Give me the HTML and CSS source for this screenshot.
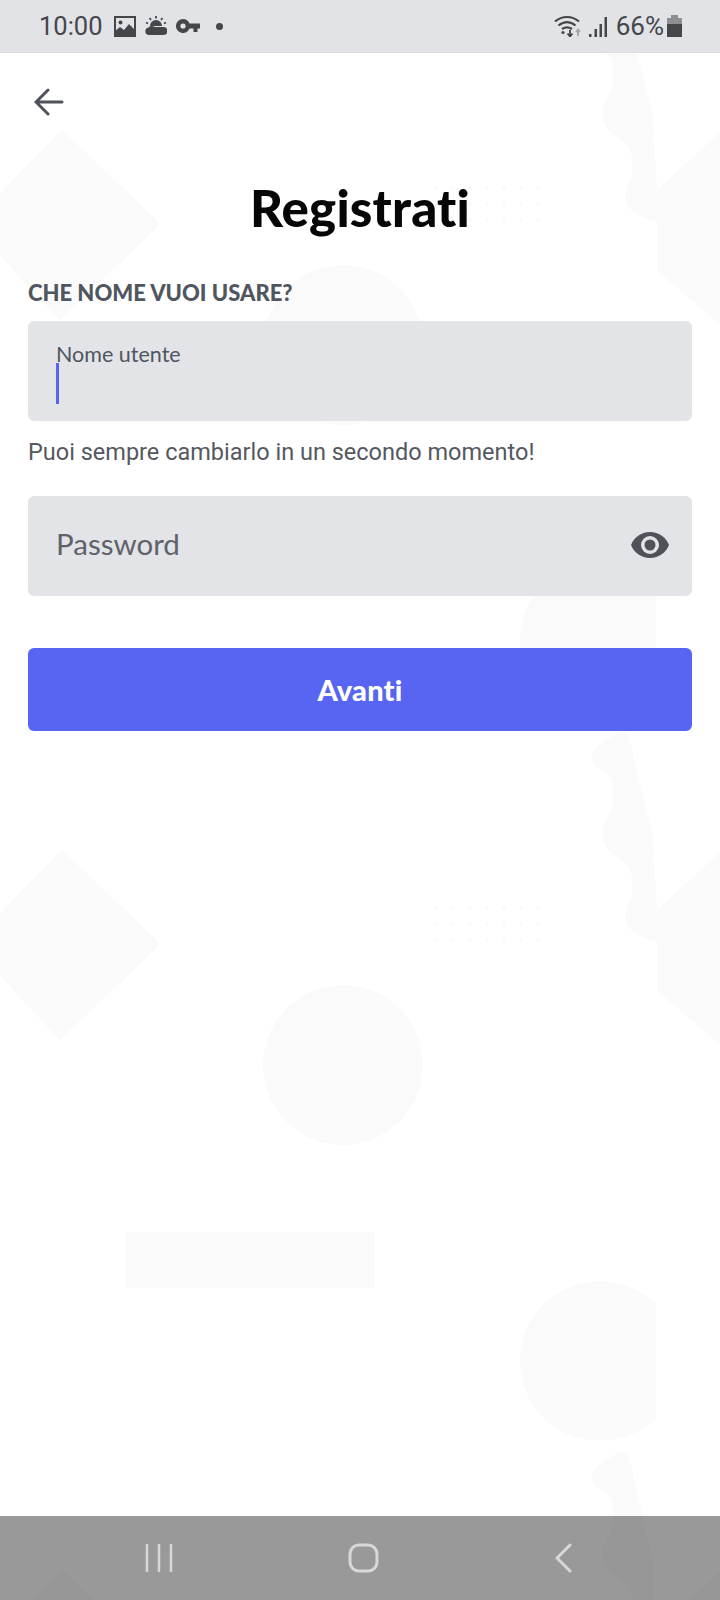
FILE: index.html
```html
<!DOCTYPE html>
<html lang="it">
<head>
    <meta charset="UTF-8">
    <meta name="viewport" content="width=device-width, initial-scale=1.0">
    <title>Registrati</title>
    <link rel="stylesheet" href="styles.css">
</head>
<body>
<!-- Faint background artwork, repeats every 720px -->
<svg class="bg-art" width="720" height="1600" aria-hidden="true">
    <defs>
        <pattern id="tile" width="720" height="720" patternUnits="userSpaceOnUse">
            <g class="shapes">
                <path d="M62 130 161 224 60 320-30 224Z"/>
                <circle cx="343" cy="345" r="80"/>
                <rect x="126" y="512" width="249" height="56"/>
                <path d="M656 584A80 80 0 1 0 656 698Z"/>
                <path d="M720 132 657 190V270L720 325Z"/>
                <path d="M618 13C608 18 592 28 592 38 592 50 610 52 612 60 614 72 614 82 612 88 608 98 602 106 602 114 603 128 612 134 622 140 634 148 632 160 632 173 630 182 625 188 625 197 625 210 640 218 657 222V190L653 117 637 53 630 20C628 14 624 10 618 13Z"/>
            </g>
            <g class="dots">
                <circle cx="436" cy="188" r="2"/><circle cx="453" cy="188" r="2"/><circle cx="470" cy="188" r="2"/><circle cx="487" cy="188" r="2"/><circle cx="504" cy="188" r="2"/><circle cx="521" cy="188" r="2"/><circle cx="538" cy="188" r="2"/>
                <circle cx="436" cy="205" r="2"/><circle cx="453" cy="205" r="2"/><circle cx="470" cy="205" r="2"/><circle cx="487" cy="205" r="2"/><circle cx="504" cy="205" r="2"/><circle cx="521" cy="205" r="2"/><circle cx="538" cy="205" r="2"/>
                <circle cx="436" cy="221" r="2"/><circle cx="453" cy="221" r="2"/><circle cx="470" cy="221" r="2"/><circle cx="487" cy="221" r="2"/><circle cx="504" cy="221" r="2"/><circle cx="521" cy="221" r="2"/><circle cx="538" cy="221" r="2"/>
            </g>
        </pattern>
    </defs>
    <rect width="720" height="1600" fill="url(#tile)"/>
</svg>

<header class="status-bar">
    <div class="status-left">
        <span class="clock">10:00</span>
        <svg class="icon-image" width="22" height="21" viewBox="0 0 22 21">
            <path d="M1 1H21V20H1Z" fill="none" stroke="#45464a" stroke-width="2"/>
            <circle cx="6.500" cy="6.500" r="2" fill="#45464a"/>
            <path d="M1 20V15L6 11 10 14 15 8 21 14V20Z" fill="#45464a"/>
        </svg>
        <svg class="icon-sun" width="22" height="20" viewBox="0 0 22 20">
            <path d="M5 10a6 6 0 0 1 12 0Z" fill="#45464a"/>
            <path d="M11 0V2.500M4.500 2 6 4M17.500 2 16 4M1 6.500 3 7.500M21 6.500 19 7.500" stroke="#45464a" stroke-width="1.800"/>
            <path d="M3.500 19a3.800 3.800 0 0 1 0-7.500C5 9.500 8 9.500 10 11H18.500a4 4 0 0 1 0 8Z" fill="#45464a"/>
        </svg>
        <svg class="icon-key" width="24" height="14" viewBox="0 0 24 14">
            <path d="M7 0a7 7 0 0 1 6.500 4.500H24V9.500H21.500V13H17.500V9.500H13.500A7 7 0 1 1 7 0Z" fill="#45464a"/>
            <circle cx="7" cy="7" r="2.600" fill="#e2e3e7"/>
        </svg>
        <span class="status-dot"></span>
    </div>
    <div class="status-right">
        <svg class="icon-wifi" width="28" height="22" viewBox="0 0 28 22">
            <path d="M1 6.500C8 .5 18 .5 25 6.500M4.500 10.500C10 6 16 6 21.500 10.500M8 14C11 12 15 12 18 14" fill="none" stroke="#45464a" stroke-width="2.200"/>
            <circle cx="9" cy="17.500" r="1.600" fill="#45464a"/>
            <path d="M16 15V21M13.500 18.500 16 21.500 18.500 18.500" fill="none" stroke="#45464a" stroke-width="1.800"/>
            <path d="M24 21V15M22 17 24 14.500 26 17" fill="none" stroke="#a3a4a8" stroke-width="1.800"/>
        </svg>
        <svg class="icon-signal" width="20" height="21" viewBox="0 0 20 21">
            <path d="M1 18H3.500V21H1ZM6.500 13H9V21H6.500ZM11.500 8H14V21H11.500ZM16.500 1H19V21H16.500Z" fill="#45464a"/>
        </svg>
        <span class="battery-text">66%</span>
        <span class="battery"></span>
    </div>
</header>

<main class="content">
    <svg class="back-arrow" width="30" height="28" viewBox="0 0 30 28">
        <path d="M28 14H3M14 2 2 14 14 26" fill="none" stroke="#4f5258" stroke-width="3" stroke-linecap="round"/>
    </svg>

    <h1 class="title">Registrati</h1>

    <form class="signup-form">
        <label class="field-label">CHE NOME VUOI USARE?</label>
        <div class="field field-active">
            <span class="field-float">Nome utente</span>
            <span class="caret"></span>
        </div>
        <p class="hint">Puoi sempre cambiarlo in un secondo momento!</p>
        <div class="field field-password">
            <span class="placeholder">Password</span>
            <svg class="eye" width="40" height="28" viewBox="0 0 40 28">
                <path d="M20 1C11 1 4 6.500 1 14 4 21.500 11 27 20 27S36 21.500 39 14C36 6.500 29 1 20 1Z" fill="#4f5258"/>
                <circle cx="20" cy="14" r="9" fill="#e2e4e8"/>
                <circle cx="20" cy="14" r="5.500" fill="#4f5258"/>
            </svg>
        </div>
        <button type="button" class="next-btn">Avanti</button>
    </form>
</main>

<nav class="nav-bar">
    <svg width="28" height="28" viewBox="0 0 28 28">
        <path d="M2 1V27M14 1V27M26 1V27" stroke="#d8d8d8" stroke-width="2.500" stroke-linecap="round"/>
    </svg>
    <svg width="31" height="30" viewBox="0 0 31 30">
        <rect x="2" y="2" width="27" height="26" rx="9" fill="none" stroke="#d8d8d8" stroke-width="3"/>
    </svg>
    <svg width="18" height="30" viewBox="0 0 18 30">
        <path d="M16 2 3 15 16 28" fill="none" stroke="#d8d8d8" stroke-width="3" stroke-linecap="round" stroke-linejoin="round"/>
    </svg>
</nav>
</body>
</html>
```

FILE: styles.css
```css
/* Reset and base styles */
* {
    box-sizing: border-box;
    margin: 0;
    padding: 0;
}

body {
    width: 720px;
    height: 1600px;
    display: flex;
    flex-direction: column;
    overflow: hidden;
    background-color: #fff;
    font-family: Lato, "Noto Sans", sans-serif;
    color: #4f5660;
}

/* Background artwork */
.bg-art {
    position: absolute;
    top: 0;
    left: 0;
    z-index: -1;
}

.shapes {
    fill: #fafafa;
}

.dots {
    fill: #fbfbfb;
}

/* Status bar */
.status-bar {
    height: 53px;
    flex-shrink: 0;
    display: flex;
    justify-content: space-between;
    align-items: center;
    padding: 0 38px 0 39px;
    background-color: #e2e3e7;
    border-bottom: 1px solid #dcdde0;
    color: #45464a;
    font-family: Roboto, sans-serif;
}

.status-left,
.status-right {
    display: flex;
    align-items: center;
}

.clock {
    font-size: 25.500px;
    margin-right: 11px;
}

.icon-image {
    margin-right: 9px;
}

.icon-sun {
    margin-right: 9px;
}

.status-dot {
    width: 7px;
    height: 7px;
    margin-left: 16px;
    border-radius: 50%;
    background-color: #45464a;
}

.icon-wifi {
    margin-right: 6px;
}

.icon-signal {
    margin-right: 8px;
}

.battery-text {
    font-size: 26px;
}

/* Battery: lighter top part is the used charge */
.battery {
    position: relative;
    width: 15px;
    height: 19px;
    margin: 2px 0 0 3px;
    background: linear-gradient(#8e8f93 30%, #45464a 30%);
}

.battery::before {
    content: "";
    position: absolute;
    top: -3px;
    left: 4px;
    width: 7px;
    height: 3px;
    background-color: #8e8f93;
}

/* Main content */
.content {
    flex: 1;
    padding: 0 28px;
}

.back-arrow {
    display: block;
    margin: 35px 0 0 6px;
}

.title {
    margin-top: 64px;
    font-size: 51px;
    line-height: 56px;
    font-weight: 900;
    text-align: center;
    letter-spacing: 0.2px;
    color: #060607;
}

.field-label {
    display: block;
    margin-top: 43px;
    font-size: 22px;
    line-height: 28px;
    font-weight: 900;
}

.field {
    height: 100px;
    border-radius: 6px;
    background-color: #e2e4e8;
}

.field-active {
    margin-top: 14px;
    padding: 21px 28px 0;
}

.field-float {
    display: block;
    font-size: 21.500px;
    line-height: 24px;
}

.caret {
    display: block;
    width: 3px;
    height: 41px;
    margin-top: -3px;
    background-color: #5865f2;
}

.hint {
    margin-top: 17px;
    font-family: Roboto, sans-serif;
    font-size: 23.500px;
    line-height: 28px;
    color: #55585f;
}

.field-password {
    margin-top: 30px;
    display: flex;
    justify-content: space-between;
    align-items: center;
    padding: 0 22px 0 28px;
}

.placeholder {
    margin-bottom: 6px;
    font-size: 29.500px;
    color: #5e6269;
}

.eye {
    margin-bottom: 2px;
}

.next-btn {
    display: block;
    width: 100%;
    height: 83px;
    margin-top: 52px;
    border: none;
    border-radius: 6px;
    background-color: #5865f2;
    color: #fff;
    font-family: Lato, sans-serif;
    font-size: 29px;
    font-weight: 900;
    letter-spacing: 0.2px;
}

/* Bottom navigation */
.nav-bar {
    height: 84px;
    flex-shrink: 0;
    display: flex;
    align-items: center;
    padding-left: 145px;
    padding-right: 148px;
    justify-content: space-between;
    background-color: rgba(0, 0, 0, 0.4);
}
```
